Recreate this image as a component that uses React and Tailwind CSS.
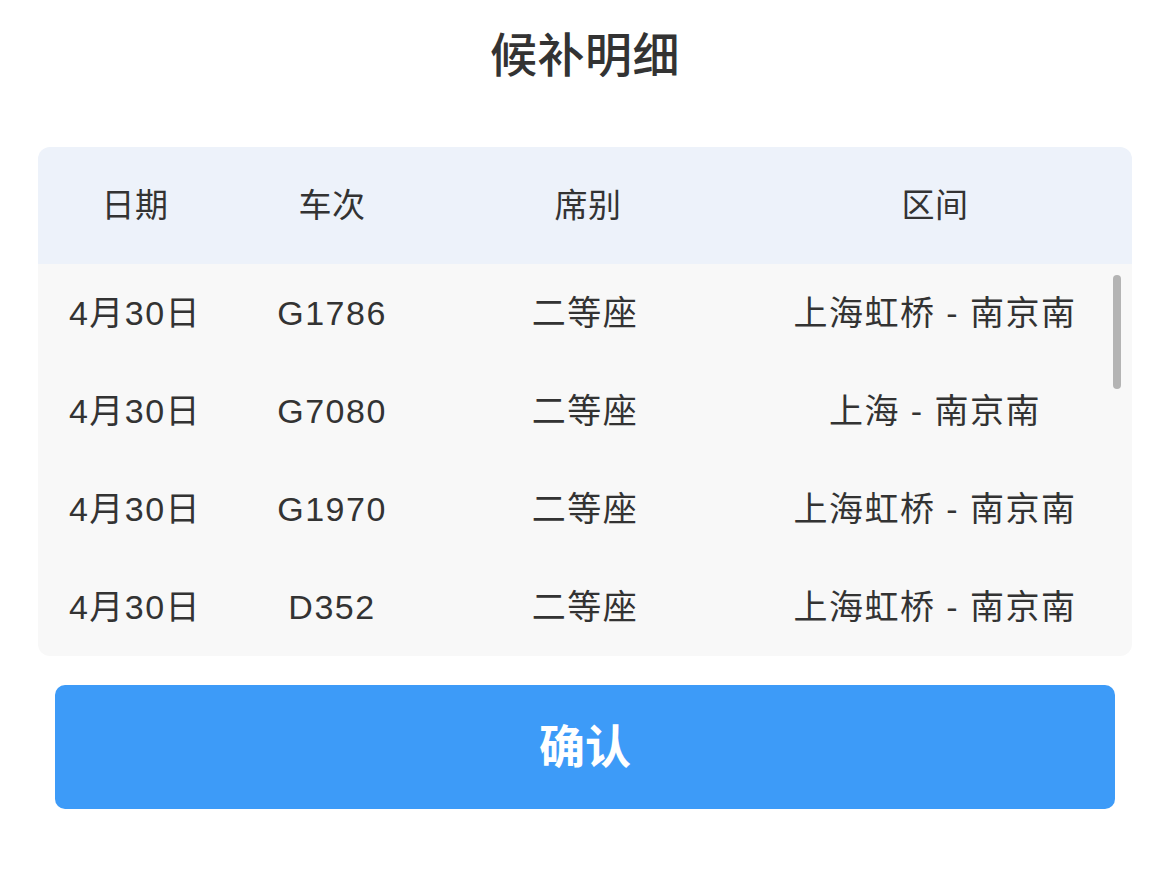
import React from 'react';

const rows = [
  { date: '4月30日', train: 'G1786', seat: '二等座', route: '上海虹桥 - 南京南' },
  { date: '4月30日', train: 'G7080', seat: '二等座', route: '上海 - 南京南' },
  { date: '4月30日', train: 'G1970', seat: '二等座', route: '上海虹桥 - 南京南' },
  { date: '4月30日', train: 'D352', seat: '二等座', route: '上海虹桥 - 南京南' },
];

const font = { fontFamily: '"Liberation Sans", "Noto Sans CJK SC", sans-serif' };

const App = () => {
  return (
    <div className="w-[1170px] h-[870px] bg-white flex flex-col text-[#333333]" style={font}>
      {/* Title */}
      <h1 className="h-[147px] pt-[24px] text-center text-[47px] leading-[64px] font-medium tracking-[0.5px]">
        候补明细
      </h1>

      {/* Detail table */}
      <div className="mx-[38px] rounded-[12px] overflow-hidden">
        <div className="grid grid-cols-[194px_200px_306px_1fr] h-[117px] items-center bg-[#edf2fa] text-[33px] tracking-[0.5px]">
          <div className="text-center">日期</div>
          <div className="text-center">车次</div>
          <div className="text-center pl-[6px]">席别</div>
          <div className="text-center">区间</div>
        </div>

        <div className="relative bg-[#f8f8f8]">
          {rows.map((row, idx) => (
            <div
              key={idx}
              className="grid grid-cols-[194px_200px_306px_1fr] h-[98px] items-center text-[34px] tracking-[1.5px]"
            >
              <div className="text-center">{row.date}</div>
              <div className="text-center">{row.train}</div>
              <div className="text-center">{row.seat}</div>
              <div className="text-center">{row.route}</div>
            </div>
          ))}
          {/* scrollbar thumb */}
          <div className="absolute right-[11px] top-[11px] w-[8px] h-[114px] rounded-full bg-[#b4b4b4]" />
        </div>
      </div>

      {/* Confirm button */}
      <button className="mx-[55px] mt-[29px] h-[124px] rounded-[10px] bg-[#3d9bf8] text-white text-[46px] font-bold">
        确认
      </button>
    </div>
  );
};

export default App;
